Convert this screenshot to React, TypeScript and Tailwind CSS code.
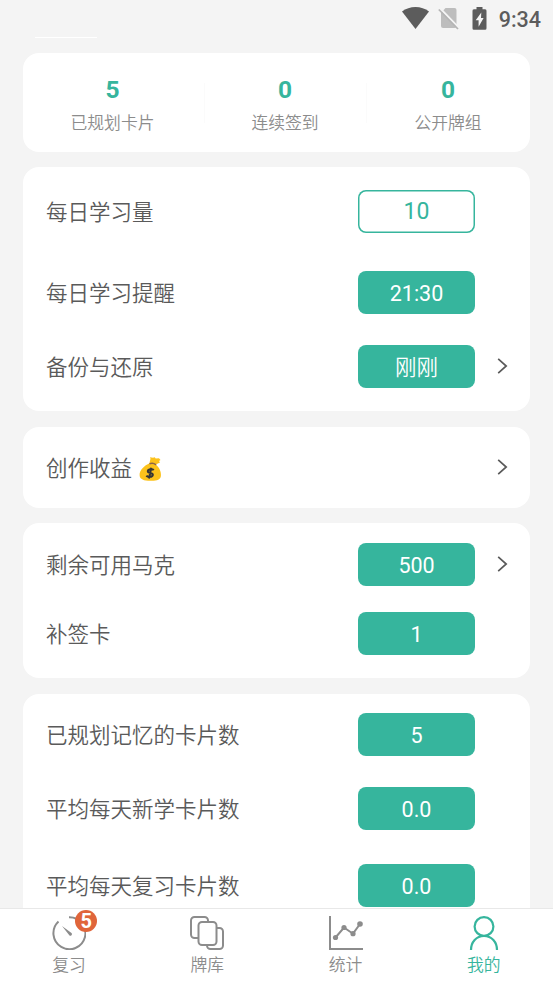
import type { ReactNode } from 'react'
import clsx from 'clsx'

type Row = {
  label: string
  value?: string
  valueClass?: string
  outlined?: boolean
  arrow?: boolean
  moneyBag?: boolean
  // spacing above the row
  gap?: string
}

type Group = {
  id: string
  className: string
  rows: Row[]
}

const stats = [
  { label: '已规划卡片', value: '5', className: 'w-[181px] pr-0.5' },
  { label: '连续签到', value: '0', className: 'w-[162px] border-l border-[#fbfbfb] pr-px' },
  { label: '公开牌组', value: '0', className: 'w-[164px] border-l border-[#fbfbfb] pr-px' }
]

const groups: Group[] = [
  {
    id: 'daily',
    className: 'h-[244px] pt-[23px]',
    rows: [
      { label: '每日学习量', value: '10', outlined: true },
      { label: '每日学习提醒', value: '21:30', gap: 'mt-[38px]' },
      { label: '备份与还原', value: '刚刚', valueClass: 'font-[350]', arrow: true, gap: 'mt-[31px]' }
    ]
  },
  {
    id: 'income',
    className: 'mt-4 h-[81px] pt-[19px]',
    rows: [{ label: '创作收益', moneyBag: true, arrow: true }]
  },
  {
    id: 'marks',
    className: 'mt-[15px] h-[155px] pt-5',
    rows: [
      { label: '剩余可用马克', value: '500', arrow: true },
      { label: '补签卡', value: '1', gap: 'mt-[26px]' }
    ]
  },
  {
    id: 'summary',
    className: 'mt-4 h-[260px] pt-[19px]',
    rows: [
      { label: '已规划记忆的卡片数', value: '5' },
      { label: '平均每天新学卡片数', value: '0.0', gap: 'mt-[31px]' },
      { label: '平均每天复习卡片数', value: '0.0', gap: 'mt-[34px]' }
    ]
  }
]

function StatusBar() {
  return (
    <header className="flex h-[37px] shrink-0 items-start justify-end pr-[12px] text-[#5c5c5c]">
      <svg className="mt-[7px] h-[22px] w-[27px]" viewBox="0 0 27 22" fill="currentColor">
        <path d="M0 4.6C3.8 1.6 8.5 0 13.5 0S23.2 1.6 27 4.6L13.5 22Z" />
      </svg>
      <svg className="mt-[7px] ml-[9px] h-[23px] w-[21px]" viewBox="0 0 21 23" fill="none">
        <path d="M7.500 1h9a2 2 0 0 1 2 2v16a2 2 0 0 1-2 2H5a2 2 0 0 1-2-2V6Z" fill="#bdbdbd" />
        <path d="M2 1.200 22 22" stroke="#f4f4f4" strokeWidth="2" />
        <path d="M.8 2.500 20 22" stroke="#b4b4b4" strokeWidth="1.700" />
      </svg>
      <svg className="mt-[7px] ml-[13px] h-[23px] w-[15px]" viewBox="0 0 15 23">
        <path
          d="M4.500 0h6v2.300H13A1.500 1.500 0 0 1 14.500 4v17.200A1.500 1.500 0 0 1 13 22.800H2A1.500 1.500 0 0 1 .5 21.200V4A1.500 1.500 0 0 1 2 2.300h2.500Z"
          fill="currentColor"
        />
        <path d="M9.300 5.500 3.700 13.200h2.900v6.500L11.600 11H9Z" fill="#f4f4f4" />
      </svg>
      <span className="mt-2 ml-3 text-[21.5px] leading-6 font-medium">9:34</span>
    </header>
  )
}

function MoneyBag() {
  return (
    <svg className="mt-[3px] ml-[7px] h-6 w-[23px]" viewBox="0 0 23 24">
      <path d="M11.500 1.800 11 .3l3 .5 1.700-.6 1 1.400 3.300-.3 1.500 1.800-1.500.8 1 1.500-4.700 2.400-6-1Z" fill="#fcc21b" />
      <path
        d="M10.700 6.300c2-.7 4.600-.1 6.200 1.200 3.400 3 5.400 7.300 5 11.500-.4 3.400-3.700 4.700-9 4.800C5.500 24 .8 22.900.6 18.300.4 13.100 5.300 8.600 10.700 6.300Z"
        fill="#fcc21b"
      />
      <path d="M10.500 6.800c2.200-.8 5-.2 6.600 1" stroke="#8d6449" strokeWidth="1.500" fill="none" />
      <path
        d="M14.800 13c-1.700-1.500-6-.9-6 1.300 0 2.500 5.500 1 5 3.700-.4 2.200-4.800 2.500-6.500.8M12.300 10.700 10 21.500"
        stroke="#353535"
        strokeWidth="2"
        fill="none"
      />
    </svg>
  )
}

function Chevron() {
  return (
    <svg className="mb-px h-4 w-[11px]" viewBox="0 0 11 16" fill="none" stroke="#5a5a5a" strokeWidth="1.700">
      <path d="M1.200.8 9.200 8 1.200 15.200" />
    </svg>
  )
}

function SettingRow({ row }: { row: Row }) {
  return (
    <div className={clsx('flex h-[43px] items-center', row.gap)}>
      <div className="flex flex-1 items-center">
        <span className="pt-0.5 font-[350]">{row.label}</span>
        {row.moneyBag ? <MoneyBag /> : null}
      </div>
      {row.value ? (
        <div
          className={clsx(
            'flex h-[43px] w-[117px] items-center justify-center rounded-[8px]',
            row.outlined
              ? 'text-[23px] text-[#36b59d] shadow-[inset_0_0_0_1.5px_#36b59d]'
              : 'bg-[#36b59d] pt-0.5 text-white',
            row.valueClass
          )}
        >
          {row.value}
        </div>
      ) : null}
      <div className="ml-[22px] w-[11px]">{row.arrow ? <Chevron /> : null}</div>
    </div>
  )
}

function ReviewIcon() {
  return (
    <svg className="h-[34px] w-[34px]" viewBox="0 0 34 34" fill="none">
      <path d="M17 1.200A16 16 0 1 1 6.500 5.500" stroke="#8c8c8c" strokeWidth="2" />
      <path d="m10 10 7.300 9.200a1.500 1.500 0 0 0 2.200-2.200Z" fill="#8c8c8c" />
    </svg>
  )
}

function DecksIcon() {
  return (
    <svg className="h-[34px] w-[34px]" viewBox="0 0 34 34" fill="#fff" stroke="#8c8c8c" strokeWidth="2">
      <rect x="17" y="12" width="16" height="21" rx="3.500" />
      <rect x="1" y="1" width="17" height="21" rx="3.500" />
      <rect x="8.500" y="6" width="18" height="23" rx="3.500" />
    </svg>
  )
}

function ChartIcon() {
  return (
    <svg className="h-[34px] w-[34px]" viewBox="0 0 34 34" fill="none" stroke="#8c8c8c" strokeWidth="2">
      <path d="M1 0v33h33" />
      <path d="M6.500 21.500 15 11.500l9 6.200 7-9.700" />
      <g fill="#8c8c8c" stroke="none">
        <circle cx="6.500" cy="21.500" r="2.600" />
        <circle cx="15" cy="11.500" r="2.600" />
        <circle cx="24" cy="17.700" r="2.600" />
        <circle cx="31" cy="8" r="2.800" />
      </g>
    </svg>
  )
}

function MineIcon() {
  return (
    <svg className="h-[34px] w-[34px]" viewBox="0 0 34 34" fill="none" stroke="#36b59d" strokeWidth="2.200">
      <circle cx="17" cy="10.500" r="9.400" />
      <path d="M4 34c0-8 5.300-14 13-14s13 6 13 14" />
    </svg>
  )
}

const tabs: { label: string; icon: ReactNode; badge?: string; active?: boolean }[] = [
  { label: '复习', icon: <ReviewIcon />, badge: '5' },
  { label: '牌库', icon: <DecksIcon /> },
  { label: '统计', icon: <ChartIcon /> },
  { label: '我的', icon: <MineIcon />, active: true }
]

export default function App() {
  return (
    <div className="flex h-[983px] w-[553px] flex-col overflow-hidden bg-[#f4f4f4] font-[Roboto,'Noto_Sans_CJK_SC',sans-serif]">
      <StatusBar />

      <main className="flex-1 overflow-hidden px-[23px]">
        <div className="ml-3 h-px w-[62px] bg-white" />

        <section className="mt-[15px] flex h-[99px] items-center rounded-[16px] bg-white">
          {stats.map((item) => (
            <div className={clsx('flex h-10 flex-col items-center justify-center', item.className)} key={item.label}>
              <p className="mt-[5px] text-[24.5px] leading-[30px] font-bold text-[#36b59d]">{item.value}</p>
              <p className="mt-1.5 text-[16.8px] leading-6 font-[350] text-[#8c8c8c]">{item.label}</p>
            </div>
          ))}
        </section>

        <div className="mt-[15px] text-[21.5px] leading-8 text-[#5a5a5a]">
          {groups.map((group) => (
            <section className={clsx('rounded-[16px] bg-white pr-[22px] pl-[23px]', group.className)} key={group.id}>
              {group.rows.map((row) => (
                <SettingRow key={row.label} row={row} />
              ))}
            </section>
          ))}
        </div>
      </main>

      <nav className="grid h-[75px] shrink-0 grid-cols-4 border-t border-[#e8e8e8] bg-white">
        {tabs.map((tab) => (
          <div
            className={clsx('flex flex-col items-center pt-[7px]', tab.active ? 'text-[#36b59d]' : 'text-[#8c8c8c]')}
            key={tab.label}
          >
            <div className="relative">
              {tab.icon}
              {tab.badge ? (
                <span className="absolute -top-[6px] left-[23px] flex h-[22px] w-[22px] items-center justify-center rounded-full bg-[#e0653a] text-[20px] leading-none font-bold text-white">
                  {tab.badge}
                </span>
              ) : null}
            </div>
            <span className="mt-[3px] text-[16.8px] leading-6 font-[350]">{tab.label}</span>
          </div>
        ))}
      </nav>
    </div>
  )
}
